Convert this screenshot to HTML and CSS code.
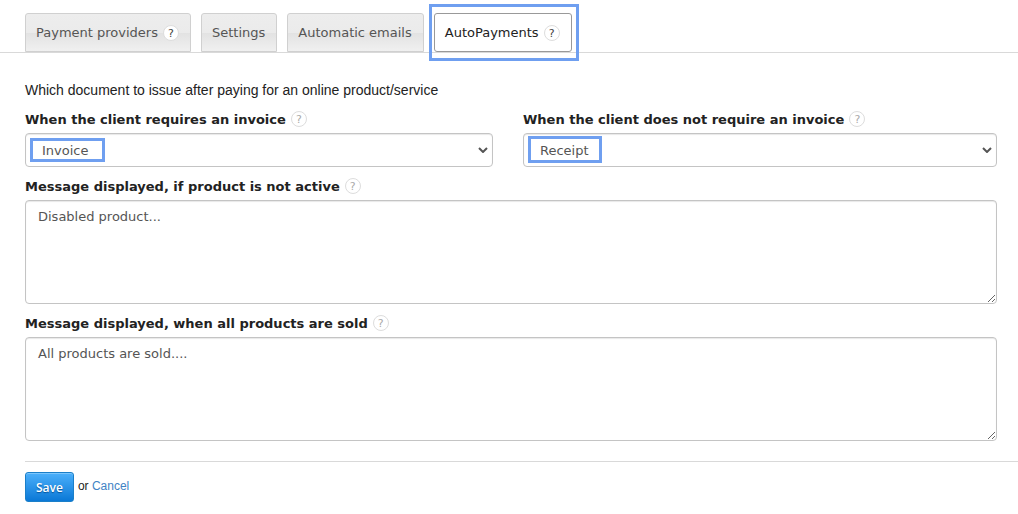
FILE: index.html
```html
<!DOCTYPE html>
<html lang="en">

<head>
    <meta charset="UTF-8">
    <meta name="viewport" content="width=device-width, initial-scale=1.0">
    <title>AutoPayments</title>
    <link rel="stylesheet" href="styles.css">
</head>

<body>
    <nav class="tabs">
        <a href="#providers" class="tab">Payment providers <span class="help">?</span></a>
        <a href="#settings" class="tab">Settings</a>
        <a href="#emails" class="tab">Automatic emails</a>
        <a href="#autopayments" class="tab active" aria-current="page">AutoPayments <span class="help">?</span></a>
    </nav>

    <form class="settings" id="autopayments">
        <p class="intro">Which document to issue after paying for an online product/service</p>

        <div class="columns">
            <div class="field">
                <div class="label-row">
                    <label for="doc_invoice">When the client requires an invoice</label>
                    <span class="help">?</span>
                </div>
                <div class="select-wrap">
                    <select id="doc_invoice">
                        <option>Invoice</option>
                        <option>Receipt</option>
                    </select>
                    <svg class="chevron" width="10" height="6" viewBox="0 0 10 6"><path d="M1 1L5 5L9 1" /></svg>
                    <span class="mark mark-invoice"></span>
                </div>
            </div>
            <div class="field">
                <div class="label-row">
                    <label for="doc_no_invoice">When the client does not require an invoice</label>
                    <span class="help">?</span>
                </div>
                <div class="select-wrap">
                    <select id="doc_no_invoice">
                        <option>Receipt</option>
                        <option>Invoice</option>
                    </select>
                    <svg class="chevron" width="10" height="6" viewBox="0 0 10 6"><path d="M1 1L5 5L9 1" /></svg>
                    <span class="mark mark-receipt"></span>
                </div>
            </div>
        </div>

        <div class="field">
            <div class="label-row">
                <label for="msg_inactive">Message displayed, if product is not active</label>
                <span class="help">?</span>
            </div>
            <textarea id="msg_inactive">Disabled product...</textarea>
        </div>

        <div class="field">
            <div class="label-row">
                <label for="msg_sold">Message displayed, when all products are sold</label>
                <span class="help">?</span>
            </div>
            <textarea id="msg_sold">All products are sold....</textarea>
        </div>
    </form>

    <div class="actions">
        <button type="submit" form="autopayments" class="save">Save</button>
        <span>or <a href="#cancel">Cancel</a></span>
    </div>
</body>

</html>
```

FILE: styles.css
```css
* {
    box-sizing: border-box;
}

body {
    margin: 0;
    background: #fff;
    color: #222;
    font-family: Verdana, "DejaVu Sans", sans-serif;
    font-size: 13px;
}

/* tabs */
.tabs {
    display: flex;
    gap: 10px;
    padding: 13px 25px 0;
    border-bottom: 1px solid #d9d9d9;
}

.tab {
    position: relative;
    display: flex;
    align-items: center;
    gap: 5px;
    height: 39px;
    padding: 0 11px 0 10px;
    border: 1px solid #d0d0d0;
    border-radius: 3px 3px 0 0;
    background: linear-gradient(#ededed, #ebebeb 50%, #e2e2e2 51%, #f0f0f0);
    color: #555;
    text-decoration: none;
    white-space: nowrap;
}

.tab.active {
    border-color: #999;
    border-radius: 3px;
    background: #fff;
    color: #222;
}

.tab.active::after {
    content: "";
    position: absolute;
    inset: -10px -8px -10px -6px;
    border: 3px solid #6f9ff0;
    pointer-events: none;
}

.help {
    width: 16px;
    height: 16px;
    border: 1px solid #ddd;
    border-radius: 50%;
    background: #fff;
    color: #aaa;
    font-size: 11px;
    line-height: 15px;
    text-align: center;
}

.tab .help {
    color: #444;
}

/* form */
.settings {
    padding: 27px 21px 20px 25px;
}

.intro {
    margin: 0;
    font-family: "Liberation Sans", Arial, sans-serif;
    font-size: 14px;
    line-height: 20px;
}

.columns {
    display: grid;
    grid-template-columns: 78fr 79fr;
    column-gap: 30px;
}

.field {
    padding-top: 11px;
}

.label-row {
    display: flex;
    align-items: center;
    gap: 5px;
    height: 16px;
    margin-bottom: 6px;
    font-weight: bold;
}

.label-row .help {
    font-weight: normal;
}

.select-wrap {
    position: relative;
}

select,
textarea {
    display: block;
    width: 100%;
    border: 1px solid #c4c4c4;
    border-radius: 4px;
    background: #fff;
    box-shadow: inset 0 1px 1px #e8e8e8;
    color: #555;
    font: inherit;
}

select {
    height: 34px;
    padding: 0 16px;
    appearance: none;
}

textarea {
    height: 104px;
    padding: 6px 12px;
    line-height: 19px;
    resize: vertical;
}

.chevron {
    position: absolute;
    top: 14px;
    right: 5px;
    fill: none;
    stroke: #555;
    stroke-width: 2;
    pointer-events: none;
}

.mark {
    position: absolute;
    left: 5px;
    border: 3px solid #6f9ff0;
    pointer-events: none;
}

.mark-invoice {
    top: 5px;
    width: 75px;
    height: 24px;
}

.mark-receipt {
    top: 3px;
    width: 74px;
    height: 27px;
}

/* footer */
.actions {
    display: flex;
    gap: 4px;
    margin-left: 25px;
    padding-top: 10px;
    border-top: 1px solid #d9d9d9;
    font-family: "Liberation Sans", Arial, sans-serif;
    font-size: 12px;
    line-height: 28px;
}

.actions a {
    color: #4183c4;
    text-decoration: none;
}

.save {
    height: 30px;
    padding: 0 10px;
    border: 1px solid #1b7fc9;
    border-radius: 3px;
    background: linear-gradient(#4cb0fb, #0a78d6);
    box-shadow: inset 0 1px 0 #7cc6fc;
    color: #fff;
    font-family: "Open Sans", sans-serif;
    font-size: 12px;
    font-weight: 600;
    text-shadow: 0 1px 1px #05559c;
}
```
